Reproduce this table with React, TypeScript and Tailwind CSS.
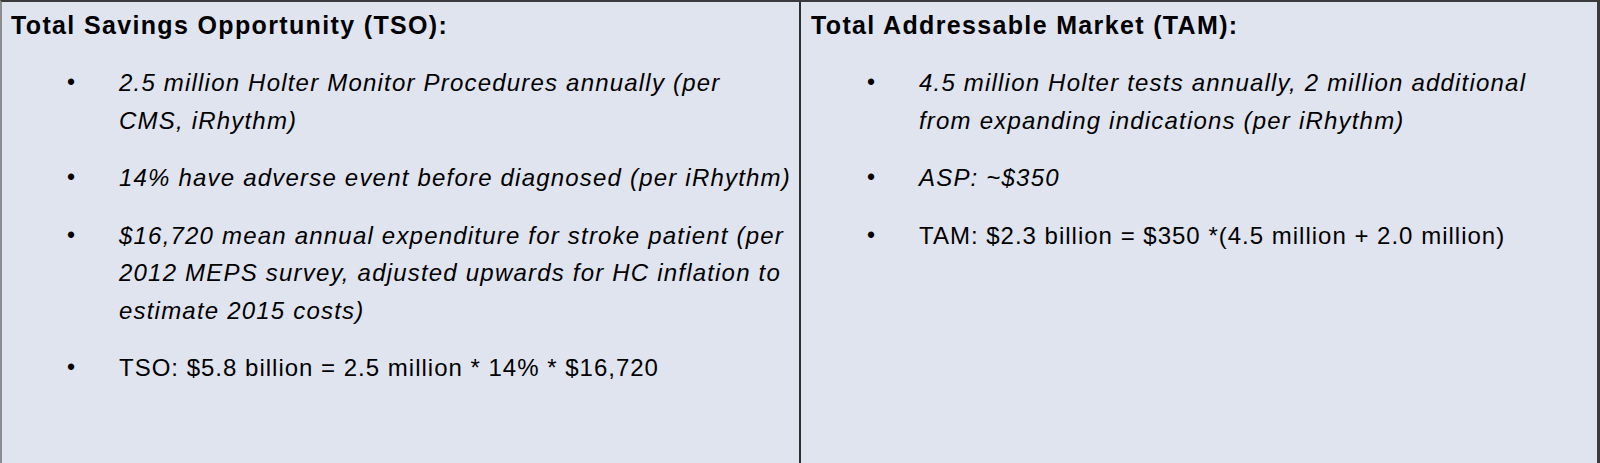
import React from "react";

// Two-column market sizing table (TSO / TAM)

type Bullet = {
  lines: string[];
  italic: boolean;
};

const tsoItems: Bullet[] = [
  { lines: ["2.5 million Holter Monitor Procedures annually (per", "CMS, iRhythm)"], italic: true },
  { lines: ["14% have adverse event before diagnosed (per iRhythm)"], italic: true },
  {
    lines: [
      "$16,720 mean annual expenditure for stroke patient (per",
      "2012 MEPS survey, adjusted upwards for HC inflation to",
      "estimate 2015 costs)",
    ],
    italic: true,
  },
  { lines: ["TSO: $5.8 billion = 2.5 million * 14% * $16,720"], italic: false },
];

const tamItems: Bullet[] = [
  {
    lines: ["4.5 million Holter tests annually, 2 million additional", "from expanding indications (per iRhythm)"],
    italic: true,
  },
  { lines: ["ASP: ~$350"], italic: true },
  { lines: ["TAM: $2.3 billion = $350 *(4.5 million + 2.0 million)"], italic: false },
];

function BulletList({ items }: { items: Bullet[] }) {
  return (
    <ul className="mt-[25px] flex flex-col gap-5">
      {items.map((item, i) => (
        <li key={i} className="flex">
          <span className="w-[108px] shrink-0 pl-[56px] text-[23px] leading-[37.5px]">•</span>
          <div
            className={
              item.italic
                ? "italic text-[24px] leading-[37.5px] tracking-[1.2px]"
                : "text-[24px] leading-[37.5px] tracking-[1px]"
            }
          >
            {item.lines.map((line, j) => (
              <div key={j} className="whitespace-nowrap">
                {line}
              </div>
            ))}
          </div>
        </li>
      ))}
    </ul>
  );
}

export default function App() {
  return (
    <div className="h-[463px] w-[1600px] bg-[#dfe4ef] font-['Liberation_Sans',Arial,sans-serif] text-black border-t-2 border-t-[#3a3a3a] border-l-2 border-l-[#8c8c8c] border-r-[3px] border-r-[#3a3a3a] flex">
      <div className="w-[799px] shrink-0 border-r-2 border-r-[#2e2e2e] pt-[10px] pl-[9px]">
        <h2 className="text-[25px] font-bold leading-[27px] tracking-[1.35px]">Total Savings Opportunity (TSO):</h2>
        <BulletList items={tsoItems} />
      </div>
      <div className="flex-1 pt-[10px] pl-[10px]">
        <h2 className="text-[25px] font-bold leading-[27px] tracking-[1.35px]">Total Addressable Market (TAM):</h2>
        <BulletList items={tamItems} />
      </div>
    </div>
  );
}
